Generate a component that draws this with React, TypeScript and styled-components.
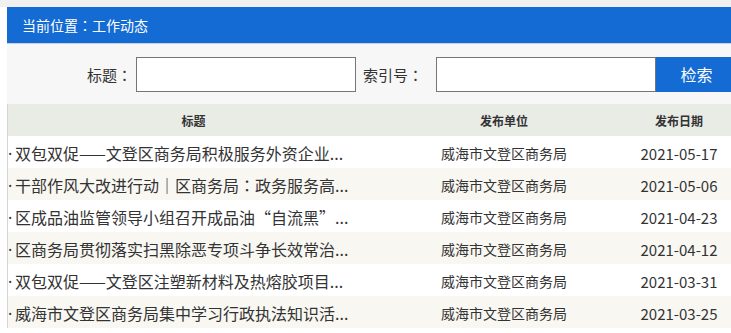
import styled, { createGlobalStyle } from 'styled-components';

const GlobalStyle = createGlobalStyle`
  html, body {
    margin: 0;
    padding: 0;
    background: #fff;
    overflow: hidden;
  }
  body {
    font-family: "Noto Sans CJK SC", "Noto Sans", sans-serif;
    color: #333;
  }
`;

const Page = styled.div`
  border-top: 7px solid #f0f0f0;
  width: 740px;
`;

const Main = styled.div`
  margin-left: 7px;
`;

const LocationBar = styled.div`
  height: 36px;
  background: #136bd3;
  border-bottom: 1px solid #c9d2de;
  color: #fff;
  font-size: 14px;
  display: flex;
  align-items: center;
  padding-left: 15px;
`;

// full-width colon drawn centred in its cell, as the reference font does
const Colon = styled.span`
  font-family: "Noto Sans CJK TC", "Noto Sans CJK SC", sans-serif;
`;

const SearchBar = styled.form`
  height: 60px;
  background: #f7f7f7;
  display: flex;
  align-items: center;
  padding-left: 80px;
`;

const Label = styled.label<{ $gap: number }>`
  font-size: 15px;
  color: #333;
  margin-right: ${(p) => p.$gap}px;
`;

const Input = styled.input`
  box-sizing: border-box;
  width: 220px;
  height: 35px;
  border: 1px solid #767676;
  background: #fff;
  margin: 0 7px 0 0;
  padding: 0 6px;
  outline: none;
`;

const SearchButton = styled.button`
  box-sizing: border-box;
  width: 81px;
  height: 35px;
  margin-left: -7px;
  border: none;
  background: #136bd3;
  color: #fff;
  font-family: inherit;
  font-size: 16px;
  cursor: pointer;
`;

const Table = styled.div`
  border-left: 1px solid #d4d4d4;
`;

const Row = styled.div<{ $bg: string }>`
  display: grid;
  grid-template-columns: 371px 250px 100px;
  height: 32px;
  align-items: center;
  background: ${(p) => p.$bg};
`;

const HeadCell = styled.div`
  text-align: center;
  font-size: 12px;
  font-weight: bold;
  color: #333;
`;

const TitleCell = styled.a`
  font-size: 16px;
  color: #333;
  text-decoration: none;
  white-space: nowrap;
  overflow: hidden;
  padding-top: 2px;
`;

const Dot = styled.span`
  display: inline-block;
  width: 7px;
  font-family: "Noto Sans", sans-serif;
`;

const UnitCell = styled.div`
  text-align: center;
  font-size: 14px;
  padding-top: 2px;
`;

const DateCell = styled.div`
  text-align: center;
  font-size: 15px;
  padding-top: 2px;
`;

const items = [
  { title: '双包双促——文登区商务局积极服务外资企业...', date: '2021-05-17' },
  { title: ['干部作风大改进行动｜区商务局', '政务服务高...'], date: '2021-05-06' },
  { title: '区成品油监管领导小组召开成品油“自流黑”...', date: '2021-04-23' },
  { title: '区商务局贯彻落实扫黑除恶专项斗争长效常治...', date: '2021-04-12' },
  { title: '双包双促——文登区注塑新材料及热熔胶项目...', date: '2021-03-31' },
  { title: '威海市文登区商务局集中学习行政执法知识活...', date: '2021-03-25' },
];

export default function App() {
  return (
    <Page>
      <GlobalStyle />
      <Main>
        <LocationBar>
          当前位置<Colon>：</Colon>工作动态
        </LocationBar>
        <SearchBar onSubmit={(e) => e.preventDefault()}>
          <Label $gap={4}>
            标题<Colon>：</Colon>
          </Label>
          <Input type="text" />
          <Label $gap={13}>
            索引号<Colon>：</Colon>
          </Label>
          <Input type="text" />
          <SearchButton type="submit">检索</SearchButton>
        </SearchBar>
        <Table>
          <Row $bg="#e9ebe5">
            <HeadCell>标题</HeadCell>
            <HeadCell>发布单位</HeadCell>
            <HeadCell>发布日期</HeadCell>
          </Row>
          {items.map((item, i) => (
            <Row key={item.date} $bg={i % 2 === 0 ? '#fff' : '#f8f7f2'}>
              <TitleCell href="#">
                <Dot>·</Dot>
                {Array.isArray(item.title) ? (
                  <>
                    {item.title[0]}
                    <Colon>：</Colon>
                    {item.title[1]}
                  </>
                ) : (
                  item.title
                )}
              </TitleCell>
              <UnitCell>威海市文登区商务局</UnitCell>
              <DateCell>{item.date}</DateCell>
            </Row>
          ))}
        </Table>
      </Main>
    </Page>
  );
}
